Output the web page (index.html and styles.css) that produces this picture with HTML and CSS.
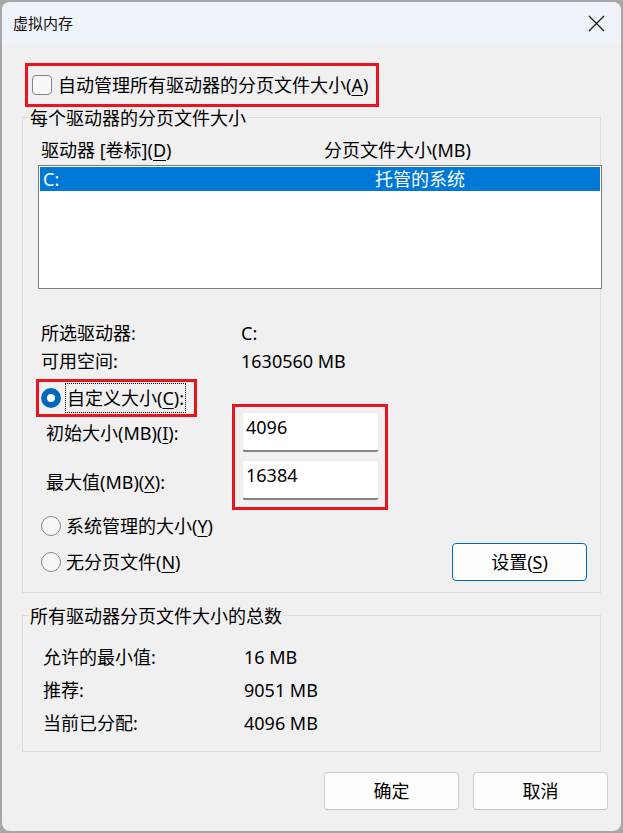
FILE: index.html
```html
<!DOCTYPE html>
<html lang="zh-CN">
<head>
<meta charset="utf-8">
<title>虚拟内存</title>
<link rel="stylesheet" href="styles.css">
</head>
<body>
<div class="window">
  <div class="titlebar">
    <span class="title">虚拟内存</span>
    <svg class="close" width="17" height="17" viewBox="0 0 17 17"><path d="M1 1 L16 16 M16 1 L1 16" stroke="#1a1a1a" stroke-width="1.3" fill="none"/></svg>
  </div>
  <div class="content">
    <div class="mark mark-auto">
      <span class="checkbox"></span>
      <span>自动管理所有驱动器的分页文件大小(<u>A</u>)</span>
    </div>

    <div class="group group-drive">
      <div class="group-title">每个驱动器的分页文件大小</div>
      <div class="col-head"><span>驱动器 [卷标](<u>D</u>)</span><span>分页文件大小(MB)</span></div>
      <div class="listbox">
        <div class="list-row selected"><span>C:</span><span>托管的系统</span></div>
      </div>
      <div class="info">
        <span>所选驱动器:</span><span>C:</span>
        <span>可用空间:</span><span>1630560 MB</span>
      </div>
      <div class="custom">
        <div class="custom-left">
          <div class="mark mark-radio">
            <span class="radio checked"></span>
            <span class="focus">自定义大小(<u>C</u>):</span>
          </div>
          <div class="field-label l1">初始大小(MB)(<u>I</u>):</div>
          <div class="field-label l2">最大值(MB)(<u>X</u>):</div>
        </div>
        <div class="mark mark-fields">
          <div class="textbox">4096</div>
          <div class="textbox">16384</div>
        </div>
      </div>
      <div class="options">
        <div class="radio-row r1"><span class="radio"></span><span>系统管理的大小(<u>Y</u>)</span></div>
        <div class="radio-row r2"><span class="radio"></span><span>无分页文件(<u>N</u>)</span></div>
        <button class="btn btn-set">设置(<u>S</u>)</button>
      </div>
    </div>

    <div class="group group-total">
      <div class="group-title">所有驱动器分页文件大小的总数</div>
      <div class="totals">
        <span>允许的最小值:</span><span>16 MB</span>
        <span>推荐:</span><span>9051 MB</span>
        <span>当前已分配:</span><span>4096 MB</span>
      </div>
    </div>

    <div class="actions">
      <button class="btn">确定</button>
      <button class="btn">取消</button>
    </div>
  </div>
</div>
</body>
</html>
```
FILE: styles.css
```css
* { box-sizing: border-box; }
html, body { margin: 0; padding: 0; }
body {
  width: 623px;
  height: 833px;
  background: #a7a7a7;
  font-family: "Noto Sans", "Noto Sans CJK SC", sans-serif;
  font-size: 18px;
  color: #000;
  overflow: hidden;
  white-space: nowrap;
}
u { text-decoration-thickness: 1px; text-underline-offset: 3px; }

.window {
  margin: 2px 0 0 2px;
  width: 619px;
  height: 829px;
  border-radius: 8px;
  background: #f0f0f0;
  overflow: hidden;
}
.titlebar {
  height: 42px;
  background: #eef2f9;
  display: flex;
  align-items: center;
  justify-content: space-between;
  padding: 0 16px 0 11px;
}
.title { font-size: 15px; line-height: 20px; font-family: "Noto Sans CJK SC", sans-serif; color: #111; }
.close { display: block; }

.content { padding: 0 20px; }

.mark { border: 3px solid #e8141e; position: relative; z-index: 1; }

.mark-auto {
  margin: 19px 0 0 3px;
  width: 354px;
  height: 44px;
  display: flex;
  align-items: center;
  padding-left: 4px;
  gap: 6px;
  line-height: 24px;
}
.checkbox {
  width: 20px; height: 20px;
  border: 1px solid #858585;
  border-radius: 4px;
  background: #f8f8f8;
  flex: none;
}

.group { border: 1px solid #dcdcdc; }
.group-title {
  width: fit-content;
  margin: -12px 0 0 6px;
  padding: 0 1px;
  background: #f0f0f0;
  line-height: 24px;
}
.group-drive { margin-top: 10px; padding-bottom: 18px; }

.col-head {
  margin-top: 8px;
  padding-left: 18px;
  display: grid;
  grid-template-columns: 283px auto;
  line-height: 24px;
}
.listbox {
  margin: 3px 0 0 15px;
  width: 564px;
  height: 124px;
  border: 1px solid #7a7a7a;
  background: #fff;
  padding: 1px;
}
.list-row {
  height: 24px;
  line-height: 24px;
  display: grid;
  grid-template-columns: 332px auto;
  padding-left: 3px;
}
.list-row.selected { background: #0078d7; color: #fff; }

.info {
  margin-top: 32px;
  padding-left: 18px;
  display: grid;
  grid-template-columns: 200px auto;
  row-gap: 4px;
  line-height: 24px;
}

.custom {
  margin-top: 6px;
  padding-left: 13px;
  display: flex;
  align-items: flex-start;
}
.custom-left { width: 196px; flex: none; }
.mark-radio {
  width: 161px;
  height: 38px;
  display: flex;
  align-items: center;
  padding-left: 2px;
  gap: 4px;
}
.focus {
  height: 30px;
  line-height: 28px;
  border: 1px dotted #000;
  padding: 0 1px;
}
.field-label { line-height: 24px; padding-left: 10px; }
.field-label.l1 { margin-top: 4px; }
.field-label.l2 { margin-top: 25px; }

.mark-fields {
  margin-top: 25px;
  width: 156px;
  padding: 5px 6px 7px 7px;
  display: flex;
  flex-direction: column;
  gap: 8px;
}
.textbox {
  width: 137px;
  height: 40px;
  background: #fff;
  border: 1px solid #ececec;
  border-bottom: 2px solid #868686;
  border-radius: 3px;
  padding: 2px 0 0 3px;
  line-height: 24px;
}

.radio {
  width: 20px; height: 20px;
  border-radius: 50%;
  border: 1px solid #858585;
  background: #f6f6f6;
  flex: none;
}
.radio.checked {
  border: none;
  background: #fff;
  box-shadow: inset 0 0 0 6px #0067c0;
}

.options {
  margin-top: 4px;
  padding-left: 18px;
  display: grid;
  grid-template-columns: 1fr auto;
  grid-template-rows: 24px 24px;
  row-gap: 12px;
  line-height: 24px;
}
.radio-row { display: flex; align-items: center; gap: 5px; grid-column: 1; }
.radio-row.r1 { grid-row: 1; }
.radio-row.r2 { grid-row: 2; }

.btn {
  font: inherit;
  color: #000;
  width: 135px;
  height: 38px;
  background: #fdfdfd;
  border: 1px solid #d0d0d0;
  border-bottom-color: #bdbdbd;
  border-radius: 4px;
  padding: 0;
  line-height: 24px;
}
.btn-set {
  grid-column: 2;
  grid-row: 2;
  align-self: center;
  margin-right: 13px;
  border: 1px solid #0067c0;
}

.group-total { margin-top: 22px; padding-bottom: 16px; }
.totals {
  margin-top: 17px;
  padding-left: 20px;
  display: grid;
  grid-template-columns: 201px auto;
  row-gap: 9px;
  line-height: 24px;
}

.actions {
  margin: 20px -7px 0 0;
  display: flex;
  justify-content: flex-end;
  gap: 14px;
}
```
